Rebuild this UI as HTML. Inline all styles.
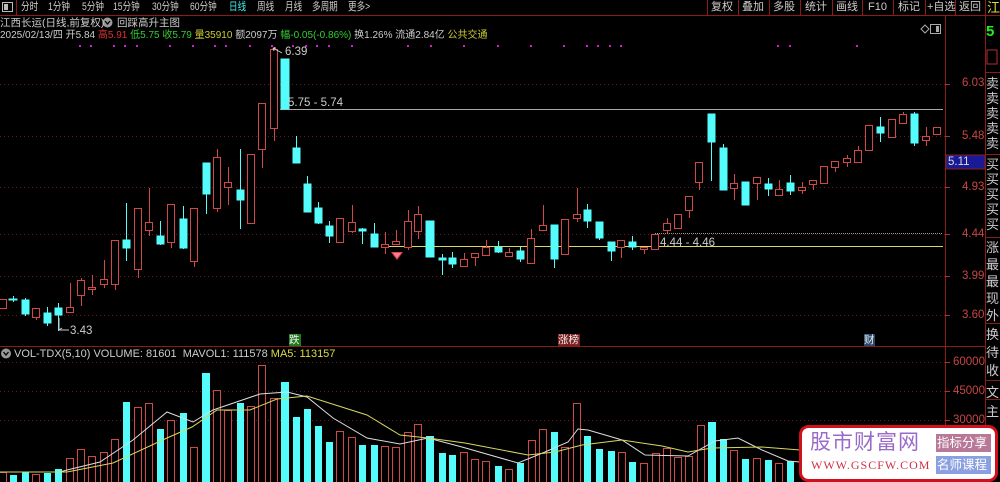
<!DOCTYPE html>
<html><head><meta charset="utf-8"><style>
body{margin:0;background:#000;width:1000px;height:482px;overflow:hidden;position:relative;font-family:"Liberation Sans","Noto Sans CJK SC",sans-serif;}
.t{position:absolute;white-space:nowrap;font-size:11.5px;line-height:14px}
.m{position:absolute;top:0;color:#ccc;font-size:11px;line-height:14px;white-space:nowrap}
.m.s{font-size:11px;transform:scaleX(0.78);transform-origin:0 0}
svg{position:absolute;left:0;top:0}
</style></head><body>
<svg width="1000" height="482" viewBox="0 0 1000 482">
<line x1="0" y1="15.5" x2="1000" y2="15.5" stroke="#8a1c1c"/>
<rect x="2.5" y="2.5" width="10" height="9" fill="none" stroke="#bbb"/><rect x="4" y="4" width="4" height="6" fill="#bbb"/>
<line x1="16.5" y1="0" x2="16.5" y2="15" stroke="#8a1c1c"/>
<g stroke="#8a1c1c"><line x1="707.5" y1="0" x2="707.5" y2="15"/><line x1="738.5" y1="0" x2="738.5" y2="15"/><line x1="769.5" y1="0" x2="769.5" y2="15"/><line x1="800.5" y1="0" x2="800.5" y2="15"/><line x1="832.5" y1="0" x2="832.5" y2="15"/><line x1="862.5" y1="0" x2="862.5" y2="15"/><line x1="893.5" y1="0" x2="893.5" y2="15"/><line x1="925.5" y1="0" x2="925.5" y2="15"/><line x1="955.5" y1="0" x2="955.5" y2="15"/><line x1="985.5" y1="0" x2="985.5" y2="482"/>
<line x1="945.5" y1="16" x2="945.5" y2="482"/>
<line x1="0" y1="346.5" x2="985" y2="346.5"/>
<line x1="985" y1="72.5" x2="1000" y2="72.5"/><line x1="985" y1="154.5" x2="1000" y2="154.5"/><line x1="985" y1="237.5" x2="1000" y2="237.5"/><line x1="985" y1="323.5" x2="1000" y2="323.5"/><line x1="985" y1="380.5" x2="1000" y2="380.5"/><line x1="985" y1="399.5" x2="1000" y2="399.5"/>
</g>
<rect x="987" y="50" width="10" height="14" fill="none" stroke="#b03030"/>
<g stroke="#6a1a1a" stroke-dasharray="1 3">
<line x1="0" y1="84.5" x2="945" y2="84.5"/><line x1="0" y1="136.5" x2="945" y2="136.5"/><line x1="0" y1="187.5" x2="945" y2="187.5"/><line x1="0" y1="234.5" x2="945" y2="234.5"/><line x1="0" y1="276.5" x2="945" y2="276.5"/><line x1="0" y1="315.5" x2="945" y2="315.5"/>
<line x1="0" y1="362.5" x2="945" y2="362.5"/><line x1="0" y1="391.5" x2="945" y2="391.5"/><line x1="0" y1="420.5" x2="945" y2="420.5"/>
</g>
<g stroke="#b03030"><line x1="945" y1="84.5" x2="950" y2="84.5"/><line x1="945" y1="136.5" x2="950" y2="136.5"/><line x1="945" y1="187.5" x2="950" y2="187.5"/><line x1="945" y1="234.5" x2="950" y2="234.5"/><line x1="945" y1="276.5" x2="950" y2="276.5"/><line x1="945" y1="315.5" x2="950" y2="315.5"/><line x1="945" y1="362.5" x2="950" y2="362.5"/><line x1="945" y1="391.5" x2="950" y2="391.5"/><line x1="945" y1="420.5" x2="950" y2="420.5"/></g>
<rect x="946" y="155" width="39" height="14" fill="#1a1a96" stroke="#8a1c1c"/>
<line x1="280" y1="109.5" x2="943" y2="109.5" stroke="#aaa"/>
<line x1="385" y1="246.5" x2="943" y2="246.5" stroke="#d8d860"/>
<line x1="655" y1="233.5" x2="943" y2="233.5" stroke="#999" stroke-dasharray="1 1"/>
<g fill="#d020d0">
<rect x="79" y="45" width="2" height="2"/><rect x="90" y="45" width="2" height="2"/><rect x="113" y="45" width="2" height="2"/><rect x="124" y="45" width="2" height="2"/><rect x="136" y="45" width="2" height="2"/><rect x="169" y="45" width="2" height="2"/><rect x="192" y="45" width="2" height="2"/><rect x="214" y="45" width="2" height="2"/><rect x="225" y="45" width="2" height="2"/><rect x="249" y="45" width="2" height="2"/><rect x="271" y="45" width="2" height="2"/><rect x="292" y="45" width="2" height="2"/><rect x="305" y="45" width="2" height="2"/><rect x="316" y="45" width="2" height="2"/><rect x="328" y="45" width="2" height="2"/><rect x="351" y="45" width="2" height="2"/><rect x="407" y="45" width="2" height="2"/><rect x="430" y="45" width="2" height="2"/><rect x="463" y="45" width="2" height="2"/><rect x="497" y="45" width="2" height="2"/><rect x="530" y="45" width="2" height="2"/><rect x="563" y="45" width="2" height="2"/><rect x="586" y="45" width="2" height="2"/><rect x="597" y="45" width="2" height="2"/><rect x="609" y="45" width="2" height="2"/><rect x="620" y="45" width="2" height="2"/><rect x="777" y="45" width="2" height="2"/><rect x="789" y="45" width="2" height="2"/><rect x="856" y="45" width="2" height="2"/>
</g>
<g stroke-width="1">
<g stroke="#d04848" fill="#000">
<rect x="-0.5" y="299.5" width="7" height="9"/>
<line x1="36.5" y1="317" x2="36.5" y2="320"/><rect x="32.5" y="308.5" width="7" height="9"/>
<line x1="70.5" y1="283" x2="70.5" y2="312"/><rect x="66.5" y="307.5" width="7" height="5"/>
<line x1="81.5" y1="278" x2="81.5" y2="306"/><rect x="77.5" y="280.5" width="7" height="15"/>
<line x1="92.5" y1="275" x2="92.5" y2="295"/><rect x="88.5" y="287.5" width="7" height="2"/>
<line x1="104.5" y1="260" x2="104.5" y2="288"/><rect x="100.5" y="279.5" width="7" height="5"/>
<line x1="115.5" y1="284" x2="115.5" y2="290"/><rect x="111.5" y="240.5" width="7" height="44"/>
<line x1="138.5" y1="269" x2="138.5" y2="278"/><rect x="134.5" y="208.5" width="7" height="61"/>
<line x1="149.5" y1="188" x2="149.5" y2="236"/><rect x="145.5" y="222.5" width="7" height="8"/>
<line x1="171.5" y1="242" x2="171.5" y2="248"/><rect x="167.5" y="204.5" width="7" height="38"/>
<line x1="194.5" y1="261" x2="194.5" y2="267"/><rect x="190.5" y="208.5" width="7" height="53"/>
<line x1="217.5" y1="149" x2="217.5" y2="212"/><rect x="213.5" y="157.5" width="7" height="51"/>
<line x1="228.5" y1="167" x2="228.5" y2="205"/><rect x="224.5" y="182.5" width="7" height="5"/>
<rect x="247.5" y="154.5" width="7" height="69"/>
<line x1="262.5" y1="149" x2="262.5" y2="168"/><rect x="258.5" y="103.5" width="7" height="46"/>
<line x1="274.5" y1="47" x2="274.5" y2="141"/><rect x="270.5" y="49.5" width="7" height="79"/>
<rect x="336.5" y="218.5" width="7" height="24"/>
<line x1="352.5" y1="205" x2="352.5" y2="233"/><rect x="348.5" y="222.5" width="7" height="9"/>
<line x1="385.5" y1="232" x2="385.5" y2="254"/><rect x="381.5" y="244.5" width="7" height="3"/>
<line x1="396.5" y1="230" x2="396.5" y2="245"/><rect x="392.5" y="241.5" width="7" height="3"/>
<line x1="408.5" y1="210" x2="408.5" y2="250"/><rect x="404.5" y="221.5" width="7" height="26"/>
<line x1="418.5" y1="206" x2="418.5" y2="239"/><rect x="414.5" y="214.5" width="7" height="17"/>
<line x1="464.5" y1="253" x2="464.5" y2="266"/><rect x="460.5" y="259.5" width="7" height="7"/>
<line x1="475.5" y1="253" x2="475.5" y2="266"/><rect x="471.5" y="253.5" width="7" height="4"/>
<line x1="486.5" y1="240" x2="486.5" y2="255"/><rect x="482.5" y="247.5" width="7" height="8"/>
<line x1="509.5" y1="248" x2="509.5" y2="256"/><rect x="505.5" y="252.5" width="7" height="4"/>
<line x1="531.5" y1="229" x2="531.5" y2="263"/><rect x="527.5" y="238.5" width="7" height="25"/>
<line x1="543.5" y1="205" x2="543.5" y2="230"/><rect x="539.5" y="225.5" width="7" height="5"/>
<rect x="561.5" y="219.5" width="7" height="35"/>
<line x1="577.5" y1="188" x2="577.5" y2="222"/><rect x="573.5" y="214.5" width="7" height="4"/>
<line x1="621.5" y1="240" x2="621.5" y2="258"/><rect x="617.5" y="240.5" width="7" height="7"/>
<line x1="644.5" y1="247" x2="644.5" y2="254"/><rect x="640.5" y="247.5" width="7" height="2"/>
<rect x="651.5" y="234.5" width="7" height="15"/>
<line x1="667.5" y1="218" x2="667.5" y2="233"/><rect x="663.5" y="223.5" width="7" height="7"/>
<rect x="674.5" y="214.5" width="7" height="14"/>
<line x1="689.5" y1="196" x2="689.5" y2="218"/><rect x="685.5" y="196.5" width="7" height="14"/>
<line x1="699.5" y1="162" x2="699.5" y2="190"/><rect x="695.5" y="162.5" width="7" height="20"/>
<line x1="734.5" y1="174" x2="734.5" y2="200"/><rect x="730.5" y="183.5" width="7" height="5"/>
<line x1="757.5" y1="177" x2="757.5" y2="200"/><rect x="753.5" y="177.5" width="7" height="6"/>
<line x1="779.5" y1="180" x2="779.5" y2="195"/><rect x="775.5" y="189.5" width="7" height="6"/>
<line x1="802.5" y1="182" x2="802.5" y2="194"/><rect x="798.5" y="187.5" width="7" height="3"/>
<line x1="813.5" y1="180" x2="813.5" y2="190"/><rect x="809.5" y="180.5" width="7" height="4"/>
<rect x="820.5" y="166.5" width="7" height="17"/>
<line x1="835.5" y1="161" x2="835.5" y2="172"/><rect x="831.5" y="161.5" width="7" height="6"/>
<line x1="847.5" y1="155" x2="847.5" y2="167"/><rect x="843.5" y="158.5" width="7" height="4"/>
<line x1="858.5" y1="146" x2="858.5" y2="162"/><rect x="854.5" y="150.5" width="7" height="12"/>
<rect x="865.5" y="125.5" width="7" height="25"/>
<rect x="888.5" y="119.5" width="7" height="18"/>
<line x1="903.5" y1="112" x2="903.5" y2="123"/><rect x="899.5" y="114.5" width="7" height="9"/>
<line x1="926.5" y1="127" x2="926.5" y2="146"/><rect x="922.5" y="136.5" width="7" height="4"/>
<rect x="933.5" y="127.5" width="7" height="7"/>
</g>
<g stroke="#54fcfc" fill="#54fcfc">
<line x1="13.5" y1="296" x2="13.5" y2="302"/><rect x="9" y="299" width="8" height="1"/>
<line x1="25.5" y1="298" x2="25.5" y2="316"/><rect x="22" y="300" width="7" height="14"/>
<line x1="47.5" y1="307" x2="47.5" y2="326"/><rect x="44" y="313" width="7" height="10"/>
<line x1="58.5" y1="303" x2="58.5" y2="331"/><rect x="55" y="308" width="7" height="7"/>
<line x1="126.5" y1="203" x2="126.5" y2="261"/><rect x="123" y="240" width="7" height="8"/>
<line x1="160.5" y1="221" x2="160.5" y2="245"/><rect x="157" y="236" width="7" height="8"/>
<line x1="183.5" y1="206" x2="183.5" y2="249"/><rect x="180" y="219" width="7" height="29"/>
<line x1="206.5" y1="163" x2="206.5" y2="214"/><rect x="203" y="163" width="7" height="31"/>
<line x1="240.5" y1="149" x2="240.5" y2="229"/><rect x="237" y="190" width="7" height="10"/>
<rect x="281" y="59" width="8" height="50"/>
<line x1="296.5" y1="136" x2="296.5" y2="163"/><rect x="293" y="148" width="7" height="15"/>
<line x1="307.5" y1="176" x2="307.5" y2="212"/><rect x="304" y="184" width="7" height="28"/>
<line x1="318.5" y1="202" x2="318.5" y2="224"/><rect x="315" y="208" width="7" height="15"/>
<line x1="329.5" y1="221" x2="329.5" y2="243"/><rect x="326" y="226" width="7" height="10"/>
<line x1="362.5" y1="228" x2="362.5" y2="244"/><rect x="359" y="229" width="7" height="2"/>
<line x1="374.5" y1="223" x2="374.5" y2="247"/><rect x="371" y="234" width="7" height="13"/>
<rect x="426" y="221" width="8" height="36"/>
<line x1="442.5" y1="254" x2="442.5" y2="275"/><rect x="439" y="258" width="7" height="2"/>
<line x1="452.5" y1="252" x2="452.5" y2="268"/><rect x="449" y="258" width="7" height="6"/>
<line x1="498.5" y1="241" x2="498.5" y2="253"/><rect x="495" y="247" width="7" height="5"/>
<line x1="520.5" y1="247" x2="520.5" y2="262"/><rect x="517" y="251" width="7" height="8"/>
<line x1="554.5" y1="225" x2="554.5" y2="268"/><rect x="551" y="225" width="7" height="34"/>
<line x1="587.5" y1="204" x2="587.5" y2="228"/><rect x="584" y="210" width="7" height="11"/>
<line x1="599.5" y1="222" x2="599.5" y2="240"/><rect x="596" y="222" width="7" height="16"/>
<line x1="611.5" y1="242" x2="611.5" y2="261"/><rect x="608" y="242" width="7" height="9"/>
<line x1="632.5" y1="236" x2="632.5" y2="250"/><rect x="629" y="242" width="7" height="5"/>
<line x1="711.5" y1="114" x2="711.5" y2="181"/><rect x="708" y="114" width="7" height="28"/>
<line x1="723.5" y1="144" x2="723.5" y2="190"/><rect x="720" y="148" width="7" height="42"/>
<rect x="742" y="182" width="7" height="23"/>
<line x1="768.5" y1="178" x2="768.5" y2="196"/><rect x="765" y="184" width="7" height="5"/>
<line x1="790.5" y1="175" x2="790.5" y2="195"/><rect x="787" y="183" width="7" height="8"/>
<line x1="880.5" y1="117" x2="880.5" y2="142"/><rect x="877" y="127" width="7" height="6"/>
<line x1="914.5" y1="112" x2="914.5" y2="146"/><rect x="911" y="114" width="7" height="29"/>
</g>
</g>
<path d="M391 252 L403 252 L397 260 Z" fill="#e04050"/><path d="M393 253 L401 253 L397 258Z" fill="#ff8090"/>
<path d="M273 48 L282 53 M273 48 L276 48 M273 48 L274 51" stroke="#ccc" fill="none"/>
<path d="M59 318 L59 330 L69 330 M59 330 L62 328" stroke="#ccc" fill="none"/>
<rect x="289" y="334" width="12" height="12" fill="#1e7a1e"/>
<rect x="558" y="334" width="22" height="12" fill="#7a1e1e"/>
<rect x="864" y="334" width="11" height="12" fill="#2a4a6a"/>
<g stroke="#d04848" fill="#000">
<rect x="-0.5" y="472.5" width="7" height="10"/><rect x="32.5" y="474.5" width="7" height="8"/><rect x="66.5" y="458.5" width="7" height="24"/><rect x="77.5" y="449.5" width="7" height="33"/><rect x="88.5" y="456.5" width="7" height="26"/><rect x="100.5" y="452.5" width="7" height="30"/><rect x="111.5" y="439.5" width="7" height="43"/><rect x="134.5" y="407.5" width="7" height="75"/><rect x="145.5" y="403.5" width="7" height="79"/><rect x="167.5" y="420.5" width="7" height="62"/><rect x="190.5" y="447.5" width="7" height="35"/><rect x="213.5" y="390.5" width="7" height="92"/><rect x="224.5" y="410.5" width="7" height="72"/><rect x="247.5" y="406.5" width="7" height="76"/><rect x="258.5" y="365.5" width="7" height="117"/><rect x="270.5" y="398.5" width="7" height="84"/><rect x="336.5" y="431.5" width="7" height="51"/><rect x="348.5" y="437.5" width="7" height="45"/><rect x="381.5" y="446.5" width="7" height="36"/><rect x="392.5" y="447.5" width="7" height="35"/><rect x="404.5" y="432.5" width="7" height="50"/><rect x="414.5" y="424.5" width="7" height="58"/><rect x="460.5" y="452.5" width="7" height="30"/><rect x="471.5" y="459.5" width="7" height="23"/><rect x="482.5" y="461.5" width="7" height="21"/><rect x="505.5" y="469.5" width="7" height="13"/><rect x="528.5" y="440.5" width="7" height="42"/><rect x="539.5" y="429.5" width="7" height="53"/><rect x="561.5" y="447.5" width="7" height="35"/><rect x="573.5" y="403.5" width="7" height="79"/><rect x="618.5" y="452.5" width="7" height="30"/><rect x="640.5" y="463.5" width="7" height="19"/><rect x="652.5" y="453.5" width="7" height="29"/><rect x="663.5" y="448.5" width="7" height="34"/><rect x="674.5" y="457.5" width="7" height="25"/><rect x="685.5" y="456.5" width="7" height="26"/><rect x="697.5" y="425.5" width="7" height="57"/><rect x="730.5" y="450.5" width="7" height="32"/><rect x="753.5" y="458.5" width="7" height="24"/><rect x="775.5" y="463.5" width="7" height="19"/>
</g>
<g fill="#54fcfc">
<rect x="10" y="475" width="7" height="7"/><rect x="22" y="472" width="7" height="10"/><rect x="44" y="473" width="7" height="9"/><rect x="55" y="469" width="7" height="13"/><rect x="123" y="402" width="7" height="80"/><rect x="157" y="429" width="7" height="53"/><rect x="180" y="413" width="7" height="69"/><rect x="202" y="373" width="8" height="109"/><rect x="237" y="403" width="7" height="79"/><rect x="281" y="382" width="8" height="100"/><rect x="293" y="417" width="7" height="65"/><rect x="304" y="409" width="7" height="73"/><rect x="315" y="426" width="7" height="56"/><rect x="326" y="442" width="7" height="40"/><rect x="359" y="445" width="7" height="37"/><rect x="371" y="445" width="7" height="37"/><rect x="426" y="436" width="8" height="46"/><rect x="439" y="453" width="7" height="29"/><rect x="449" y="455" width="7" height="27"/><rect x="495" y="466" width="7" height="16"/><rect x="517" y="463" width="7" height="19"/><rect x="551" y="432" width="7" height="50"/><rect x="584" y="436" width="7" height="46"/><rect x="596" y="449" width="7" height="33"/><rect x="608" y="451" width="7" height="31"/><rect x="629" y="462" width="7" height="20"/><rect x="708" y="422" width="8" height="60"/><rect x="720" y="439" width="7" height="43"/><rect x="742" y="459" width="7" height="23"/><rect x="765" y="460" width="7" height="22"/><rect x="787" y="461" width="7" height="21"/>
</g>
<polyline fill="none" stroke="#ddd" points="0,472 60,472 67,470 100,462 133,440 167,412 193,422 213,410 260,394 287,392 307,397 333,418 367,438 400,444 428,438 462,447 518,463 545,452 568,442 578,429 588,430 612,437 622,440 645,455 688,456 715,441 738,438 762,450 788,461 800,462"/>
<polyline fill="none" stroke="#d8d860" points="0,472 67,472 113,463 167,438 192,427 217,410 250,410 277,399 307,396 367,415 400,435 428,438 465,443 528,455 555,452 582,445 622,440 662,446 688,452 712,448 762,447 800,450"/>
<rect x="800.5" y="426.5" width="196" height="54" rx="8" fill="#fff" stroke="#d0101a" stroke-width="3"/>
<rect x="936" y="434" width="55" height="18" fill="#b87898"/>
<rect x="936" y="456" width="55" height="18" fill="#8aa0e0"/>
<circle cx="6" cy="353.5" r="5" fill="#999"/><path d="M3.5 352 L6 355 L8.5 352" stroke="#000" fill="none" stroke-width="1.3"/>
<circle cx="107.5" cy="22.5" r="5" fill="#999"/><path d="M105 21 L107.5 24 L110 21" stroke="#000" fill="none" stroke-width="1.3"/>
<path d="M925 25 L929 29 L925 33 L921 29 Z" stroke="#aaa" fill="none"/>
<rect x="930.5" y="24.5" width="10" height="9" fill="none" stroke="#aaa"/><rect x="936" y="26" width="3" height="6" fill="#aaa"/>
</svg>
<div class="m s" style="left:21px">分时</div>
<div class="m s" style="left:48px">1分钟</div>
<div class="m s" style="left:82px">5分钟</div>
<div class="m s" style="left:113px">15分钟</div>
<div class="m s" style="left:152px">30分钟</div>
<div class="m s" style="left:190px">60分钟</div>
<div class="m s" style="left:229px;color:#4ee">日线</div>
<div class="m s" style="left:257px">周线</div>
<div class="m s" style="left:285px">月线</div>
<div class="m s" style="left:312px">多周期</div>
<div class="m s" style="left:348px">更多&gt;</div>
<div class="m" style="left:711px">复权</div>
<div class="m" style="left:742px">叠加</div>
<div class="m" style="left:773px">多股</div>
<div class="m" style="left:805px">统计</div>
<div class="m" style="left:836px">画线</div>
<div class="m" style="left:868px">F10</div>
<div class="m" style="left:898px">标记</div>
<div class="m" style="left:927px">+自选</div>
<div class="m" style="left:959px">返回</div>
<div class="t" style="left:0;top:16px;color:#ccc;font-size:10.5px">江西长运(日线,前复权)</div>
<div class="t" style="left:117px;top:16px;color:#ccc;font-size:10.5px">回踩高升主图</div>
<div class="t" style="left:0;top:29px;color:#ccc;font-size:10px">2025/02/13/四 开5.84 <span style="color:#e03030">高5.91</span> <span style="color:#3c3">低5.75</span> <span style="color:#3c3">收5.79</span> <span style="color:#cc3">量35910</span> 额2097万 <span style="color:#3c3">幅-0.05(-0.86%)</span> 换1.26% 流通2.84亿 <span style="color:#cc3">公共交通</span></div>
<div class="t" style="left:285px;top:45px;color:#ccc">6.39</div>
<div class="t" style="left:288px;top:96px;color:#ccc">5.75 - 5.74</div>
<div class="t" style="left:660px;top:236px;color:#ccc">4.44 - 4.46</div>
<div class="t" style="left:70px;top:324px;color:#ccc">3.43</div>
<div class="t" style="left:289px;top:333px;color:#eee;font-size:10.5px">跌</div>
<div class="t" style="left:558px;top:333px;color:#eee;font-size:10.5px">涨榜</div>
<div class="t" style="left:864px;top:333px;color:#eee;font-size:10.5px">财</div>
<div class="t" style="left:14px;top:347px;color:#ccc;font-size:11px">VOL-TDX(5,10) VOLUME: 81601 &nbsp;MAVOL1: 111578 <span style="color:#dd4">MA5: 113157</span></div>
<div class="t" style="left:962px;top:76px;color:#c84646">6.03</div>
<div class="t" style="left:962px;top:129px;color:#c84646">5.48</div>
<div class="t" style="left:948px;top:155px;color:#ddd">5.11</div>
<div class="t" style="left:962px;top:180px;color:#c84646">4.93</div>
<div class="t" style="left:962px;top:227px;color:#c84646">4.44</div>
<div class="t" style="left:962px;top:269px;color:#c84646">3.99</div>
<div class="t" style="left:962px;top:308px;color:#c84646">3.60</div>
<div class="t" style="left:953px;top:355px;color:#c84646">60000</div>
<div class="t" style="left:953px;top:384px;color:#c84646">45000</div>
<div class="t" style="left:953px;top:413px;color:#c84646">30000</div>
<div class="t" style="left:987px;top:1px;color:#dd4;font-size:13px">江</div>
<div class="t" style="left:986px;top:25px;color:#2e2;font-size:15px;font-weight:bold">5</div>
<div class="t" style="left:986px;top:76px;color:#ccc;font-size:13px;line-height:15px">卖<br>卖<br>卖<br>卖<br>卖</div>
<div class="t" style="left:986px;top:157px;color:#ccc;font-size:13px;line-height:15px">买<br>买<br>买<br>买<br>买</div>
<div class="t" style="left:986px;top:239px;color:#ccc;font-size:13px;line-height:17px">涨<br>最<br>最<br>现<br>外</div>
<div class="t" style="left:986px;top:326px;color:#ccc;font-size:13px;line-height:18px">换<br>待<br>收</div>
<div class="t" style="left:986px;top:383px;color:#ccc;font-size:13px;line-height:19px">文<br>主</div>
<div class="t" style="left:810px;top:430px;color:#9a6ac8;font-size:21px;line-height:26px;letter-spacing:1px">股市财富网</div>
<div class="t" style="left:811px;top:458px;color:#d03048;font-size:12px;font-family:'Liberation Serif',serif;letter-spacing:1px">WWW.GSCFW.COM</div>
<div class="t" style="left:937px;top:435px;color:#fff;font-size:12.5px;line-height:16px">指标分享</div>
<div class="t" style="left:937px;top:457px;color:#fff;font-size:12.5px;line-height:16px">名师课程</div>
</body></html>
